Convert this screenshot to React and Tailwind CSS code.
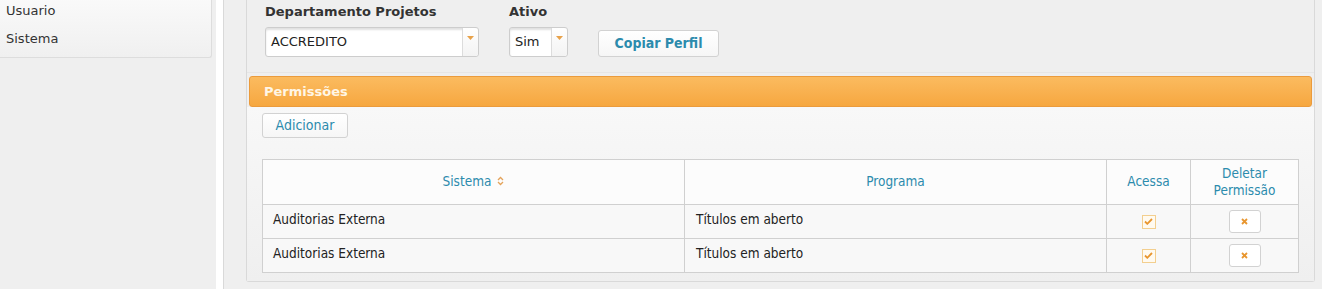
const rows = [
  { sistema: "Auditorias Externa", programa: "Títulos em aberto" },
  { sistema: "Auditorias Externa", programa: "Títulos em aberto" },
];

const Arrow = () => (
  <svg width="7" height="4" viewBox="0 0 7 4">
    <path d="M0 0h7L3.5 4z" fill="#e8a24a" />
  </svg>
);

const Select = ({ width, value }) => (
  <div
    className={`${width} h-[30px] flex border border-[#cdcdcd] rounded-[3px] bg-white shadow-[inset_0_2px_2px_rgba(0,0,0,0.12)]`}
  >
    <div className="flex-1 flex items-center px-[5px] text-[13px] text-[#222]">{value}</div>
    <div className="w-4 border-l border-[#dcdcdc] flex justify-center pt-[8px] bg-gradient-to-b from-white to-[#f3f3f3] rounded-r-[3px]">
      <Arrow />
    </div>
  </div>
);

const Check = () => (
  <div className="w-[14px] h-[14px] mx-auto border border-[#f3cf8f] bg-[#fffaf0] flex items-center justify-center">
    <svg width="9" height="7" viewBox="0 0 9 7">
      <path d="M1 3.5l2.3 2.3L8 1" stroke="#e8962f" strokeWidth="1.8" fill="none" />
    </svg>
  </div>
);

const DeleteBtn = () => (
  <button className="w-8 h-[23px] mx-auto flex items-center justify-center bg-white border border-[#d2d2d2] rounded-[3px]">
    <svg width="7" height="7" viewBox="0 0 7 7">
      <path d="M1 1l5 5M6 1L1 6" stroke="#e8962f" strokeWidth="1.8" />
    </svg>
  </button>
);

const SortIcon = () => (
  <svg width="7" height="10" viewBox="0 0 7 10" className="inline-block ml-[6px] -mt-[2px]">
    <path d="M1 4l2.5-2.5L6 4M1 6l2.5 2.5L6 6" stroke="#e4a35a" strokeWidth="1.3" fill="none" />
  </svg>
);

export default function App() {
  return (
    <div className="w-[1322px] h-[289px] overflow-hidden flex bg-[#efefef] font-['DejaVu_Sans',sans-serif] text-[#333]">
      {/* menu lateral */}
      <aside className="w-[216px] shrink-0 bg-[#efefef]">
        <div className="w-[212px] -mt-[3px] pb-[4px] border-r border-b border-[#dddddd] rounded-br-[3px] bg-gradient-to-b from-[#fafafa] to-[#f0f0f0] text-[13px] text-[#333]">
          <div className="h-7 flex items-center px-1.5">Usuario</div>
          <div className="h-7 flex items-center px-1.5">Sistema</div>
        </div>
      </aside>
      <div className="w-[7px] shrink-0 bg-white" />

      {/* conteúdo */}
      <main className="flex-1 border-l border-[#d9d9d9] pl-[22px] pr-[7px]">
        <div className="h-[282px] border border-t-0 border-[#d9d9d9] rounded-b-[3px] bg-[#efefef] flex flex-col">
          {/* formulário */}
          <div className="flex items-end gap-[30px] pl-[18px] pt-[4px] pb-[15px] border-b border-[#e6e6e6]">
            <div className="flex flex-col gap-[7px]">
              <span className="text-[13px] leading-4 font-bold text-[#333]">Departamento Projetos</span>
              <Select width="w-[214px]" value="ACCREDITO" />
            </div>
            <div className="flex flex-col gap-[7px]">
              <span className="text-[13px] leading-4 font-bold text-[#333]">Ativo</span>
              <Select width="w-[59px]" value="Sim" />
            </div>
            <button className="w-[121px] h-[27px] bg-gradient-to-b from-white to-[#f6f6f6] border border-[#d2d2d2] rounded-[3px] text-[14px] font-bold text-[#2c8bad] font-['DejaVu_Sans_Condensed','DejaVu_Sans',sans-serif] font-stretch-condensed">
              Copiar Perfil
            </button>
          </div>

          {/* permissões */}
          <div className="mt-[3px] mx-[2px] h-[31px] flex items-center px-[14px] rounded-[3px] border border-[#eb9b3c] bg-gradient-to-b from-[#fbbb5f] to-[#f6a73f] text-[13px] font-bold text-[#fff6e6]">
            Permissões
          </div>
          <div className="flex-1 flex flex-col px-[15px] pt-[6px] bg-gradient-to-b from-[#f8f8f8] to-[#efefef] font-['DejaVu_Sans_Condensed','DejaVu_Sans',sans-serif] font-stretch-condensed">
            <button className="self-start w-[86px] h-[25px] bg-gradient-to-b from-white to-[#f6f6f6] border border-[#d2d2d2] rounded-[3px] text-[14px] text-[#2c8bad]">
              Adicionar
            </button>
            <table className="mt-[21px] w-[1037px] border-collapse text-[13.5px]">
              <thead>
                <tr className="h-[45px] bg-[#fcfcfc] text-[#2c8bad]">
                  <th className="w-[422px] font-normal pb-[2px] border border-[#d0d0d0]">
                    Sistema
                    <SortIcon />
                  </th>
                  <th className="w-[422px] font-normal pb-[2px] border border-[#d0d0d0]">Programa</th>
                  <th className="w-[84px] font-normal pb-[2px] border border-[#d0d0d0]">Acessa</th>
                  <th className="font-normal leading-[17px] border border-[#d0d0d0]">
                    Deletar
                    <br />
                    Permissão
                  </th>
                </tr>
              </thead>
              <tbody>
                {rows.map((r, i) => (
                  <tr key={i} className="h-[34px] bg-[#f8f8f8] text-[#222]">
                    <td className="px-[10px] pb-[5px] border border-[#d0d0d0]">{r.sistema}</td>
                    <td className="px-[11px] pb-[5px] border border-[#d0d0d0]">{r.programa}</td>
                    <td className="border border-[#d0d0d0]">
                      <Check />
                    </td>
                    <td className="border border-[#d0d0d0]">
                      <DeleteBtn />
                    </td>
                  </tr>
                ))}
              </tbody>
            </table>
          </div>
        </div>
      </main>
    </div>
  );
}
